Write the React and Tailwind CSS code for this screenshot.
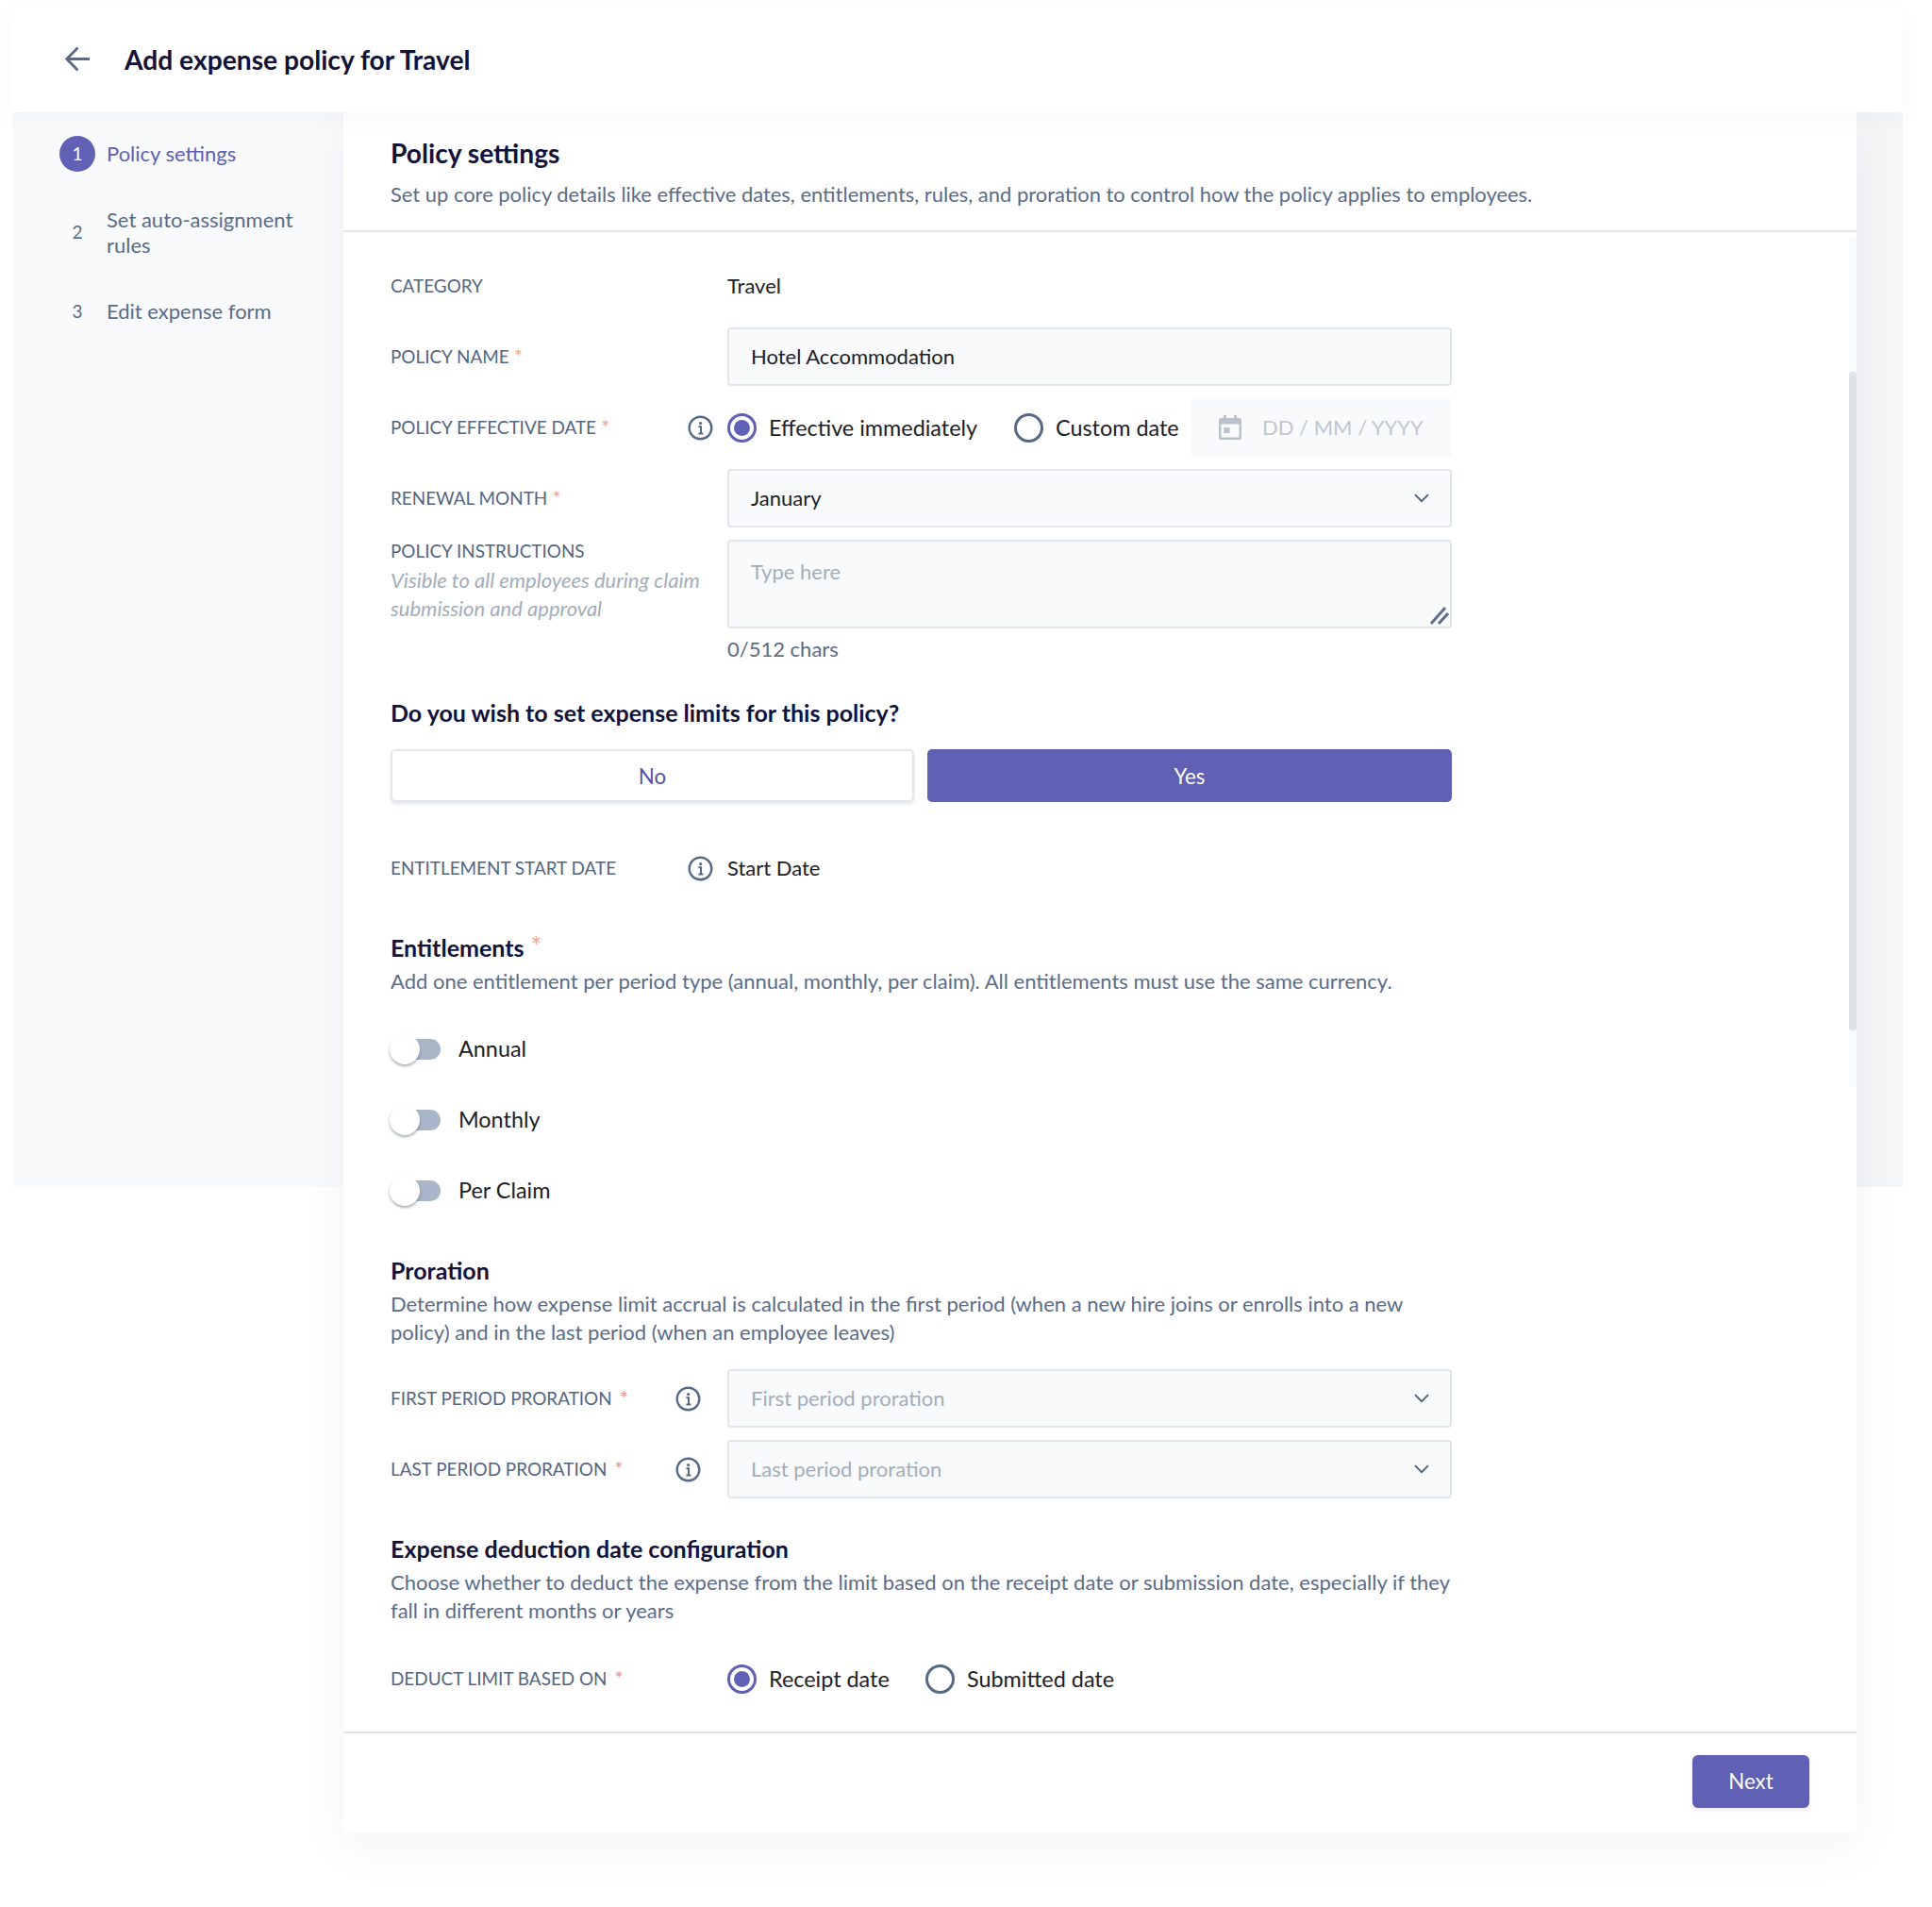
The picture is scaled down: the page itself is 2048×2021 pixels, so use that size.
const Star = ({ wide }) => (
  <span className={`text-[22px] leading-none relative top-[1px] ${wide ? "text-[#f28f8f] ml-[8px]" : "text-[#f4a68f] ml-[5px]"}`}>*</span>
);

const Info = () => (
  <svg width="27" height="27" viewBox="0 0 27 27" fill="none" className="shrink-0">
    <circle cx="13.5" cy="13.5" r="11.8" stroke="#566a86" strokeWidth="2.4" />
    <circle cx="13.6" cy="8.6" r="1.6" fill="#566a86" />
    <path d="M11.4 12.2h2.6v7M11.4 19.4h5" stroke="#566a86" strokeWidth="2" />
  </svg>
);

const Chevron = () => (
  <svg width="16" height="10" viewBox="0 0 16 10" fill="none" className="shrink-0">
    <path d="M1 1.2l7 7 7-7" stroke="#4f5f78" strokeWidth="1.8" />
  </svg>
);

const Radio = ({ on }) => (
  <span className={`w-[31px] h-[31px] rounded-full border-[3px] flex items-center justify-center shrink-0 ${on ? "border-[#6060b4]" : "border-[#566a86]"}`}>
    {on && <span className="w-[17px] h-[17px] rounded-full bg-[#6060b4]" />}
  </span>
);

const Label = ({ children, star, wide, info, pr = "pr-[15px]" }) => (
  <div className={`w-[357px] shrink-0 flex items-center justify-between ${pr}`}>
    <span className="text-[18.9px] text-[#536681] leading-[26px]">
      {children}
      {star && <Star wide={wide} />}
    </span>
    {info && <Info />}
  </div>
);

const Select = ({ text, placeholder }) => (
  <div className="flex-1 h-[62px] rounded-[4px] border-2 border-[#e2e5e9] bg-[#f8fafc] pl-[23px] pr-[22px] flex items-center justify-between">
    <span className={`text-[22px] pb-[2px] ${placeholder ? "text-[#a3adba]" : "text-[#1c2127]"}`}>{text}</span>
    <Chevron />
  </div>
);

const Toggle = ({ label }) => (
  <div className="flex items-center h-[32px]">
    <span className="relative w-[53px] h-[22px] rounded-full bg-[#a9b6c8] shrink-0">
      <span className="absolute -left-[1px] -top-[5px] w-[32px] h-[32px] rounded-full bg-white shadow-[0_2px_3px_rgba(60,70,90,0.45)]" />
    </span>
    <span className="ml-[19px] text-[23.4px] text-[#1c2127]">{label}</span>
  </div>
);

const H = ({ children, className = "" }) => (
  <h3 className={`text-[25px] font-bold text-[#12123a] leading-[30px] ${className}`}>{children}</h3>
);

const Sub = ({ children, className = "" }) => (
  <p className={`text-[22px] text-[#5a6c88] leading-[30px] ${className}`}>{children}</p>
);

const Step = ({ n, active, children }) => (
  <div className="flex items-center">
    <span className={`w-[38px] h-[38px] rounded-full flex items-center justify-center text-[19px] shrink-0 ${active ? "bg-[#6060b4] text-white" : "text-[#5a6c88]"}`}>{n}</span>
    <span className={`ml-[12px] pb-[1px] text-[22px] leading-[27px] ${active ? "text-[#6060b4]" : "text-[#5a6c88]"}`}>{children}</span>
  </div>
);

export default function App() {
  return (
    <div className="min-h-[2021px] bg-white pt-[8px] pl-[13px] pr-[31px] font-['Lato',sans-serif]">
      <header className="relative z-20 -ml-[3px] h-[111px] bg-white shadow-[0_8px_24px_rgba(30,40,60,0.03)] flex items-center pl-[59px] pb-[2px]">
        <svg width="26" height="27" viewBox="0 0 26 27" fill="none">
          <path d="M13.5 1.500L1.800 13.500l11.700 12M2 13.500h24" stroke="#5b6c88" strokeWidth="2.800" />
        </svg>
        <h1 className="ml-[37px] text-[28.2px] font-bold text-[#12123a] leading-[36px]">Add expense policy for Travel</h1>
      </header>

      <div className="flex items-start">
        <aside className="w-[351px] h-[1139px] shrink-0 bg-[#f8fafc] pl-[50px] pt-[25px] flex flex-col">
          <Step n="1" active>Policy settings</Step>
          <div className="mt-[37px]"><Step n="2">Set auto-assignment<br />rules</Step></div>
          <div className="mt-[37px]"><Step n="3">Edit expense form</Step></div>
        </aside>

        <main className="relative z-10 w-[1604px] h-[1823px] shrink-0 bg-white shadow-[0_16px_50px_rgba(30,40,60,0.05)] flex flex-col">
          <div className="h-[127px] border-b-2 border-[#e1e4e8] pl-[50px] pt-[25px]">
            <h2 className="text-[28.2px] font-bold text-[#12123a] leading-[36px]">Policy settings</h2>
            <p className="mt-[11px] text-[21.93px] text-[#5a6c88] leading-[30px]">Set up core policy details like effective dates, entitlements, rules, and proration to control how the policy applies to employees.</p>
          </div>

          <div className="absolute right-0 top-[131px] w-[8px] h-[902px] bg-[#fafbfc]">
            <div className="mt-[144px] w-[8px] h-[698px] rounded-[3px] bg-[#dfe3e7]" />
          </div>

          <div className="flex-1 pl-[50px] w-[1175px] pt-[26px] flex flex-col">
            <div className="flex flex-col gap-[13px]">
              <div className="flex items-center h-[62px]">
                <Label>CATEGORY</Label>
                <span className="text-[22px] pb-[2px] text-[#1c2127]">Travel</span>
              </div>

              <div className="flex items-center h-[62px]">
                <Label star>POLICY NAME</Label>
                <div className="flex-1 h-[62px] rounded-[4px] border-2 border-[#e2e5e9] bg-[#f8fafc] pl-[23px] pb-[2px] flex items-center text-[22px] text-[#1c2127]">Hotel Accommodation</div>
              </div>

              <div className="flex items-center h-[62px]">
                <Label star info>POLICY EFFECTIVE DATE</Label>
                <div className="flex-1 flex items-center">
                  <Radio on />
                  <span className="ml-[13px] pt-[1px] text-[23.4px] text-[#1c2127] w-[260px]">Effective immediately</span>
                  <Radio />
                  <span className="ml-[13px] pt-[1px] text-[23.4px] text-[#1c2127]">Custom date</span>
                  <div className="ml-auto w-[276px] h-[62px] rounded-[4px] bg-[#f8fafc] flex items-center pl-[29px]">
                    <svg width="24" height="26" viewBox="0 0 24 26" fill="none">
                      <path fillRule="evenodd" d="M5 0h3v3h8V0h3v3h2.500A2.500 2.500 0 0 1 24 5.500V23.500A2.500 2.500 0 0 1 21.500 26H2.500A2.500 2.500 0 0 1 0 23.500V5.500A2.500 2.500 0 0 1 2.500 3H5zM2.500 9.500V23.500H21.500V9.500z" fill="#b9c1cc" />
                      <rect x="5.500" y="13" width="6" height="6" fill="#b9c1cc" />
                    </svg>
                    <span className="ml-[22px] pb-[1px] text-[22px] text-[#c2c8d1]">DD / MM / YYYY</span>
                  </div>
                </div>
              </div>

              <div className="flex items-center h-[62px]">
                <Label star>RENEWAL MONTH</Label>
                <Select text="January" />
              </div>

              <div className="flex items-start h-[94px]">
                <div className="w-[357px] shrink-0 -mt-[1px]">
                  <div className="text-[18.9px] text-[#536681] leading-[26px]">POLICY INSTRUCTIONS</div>
                  <div className="text-[22px] italic text-[#a3adba] leading-[29.500px] mt-[3px]">Visible to all employees during claim<br />submission and approval</div>
                </div>
                <div className="relative flex-1 h-[94px] rounded-[4px] border-2 border-[#e2e5e9] bg-[#f8fafc] pl-[23px] pt-[17px] text-[22px] leading-[30px] text-[#a3adba]">
                  Type here
                  <svg width="20" height="20" viewBox="0 0 20 20" fill="none" className="absolute right-[1px] bottom-[1px]">
                    <path d="M1 18L16 1M9 18L19 7" stroke="#5f6f8a" strokeWidth="3" />
                  </svg>
                </div>
              </div>
            </div>

            <div className="pl-[357px] mt-[7px] text-[22px] leading-[30px] text-[#5a6c88]">0/512 chars</div>

            <H className="mt-[37px]">Do you wish to set expense limits for this policy?</H>

            <div className="mt-[24px] flex gap-[14px]">
              <button className="w-[555px] h-[56px] pt-[2px] rounded-[5px] border-2 border-[#e4e6ea] bg-white shadow-[0_2px_3px_rgba(40,50,70,0.12)] text-[22.3px] text-[#5252a8]">No</button>
              <button className="w-[556px] h-[56px] pt-[2px] rounded-[5px] bg-[#6060b4] text-[22.3px] text-white">Yes</button>
            </div>

            <div className="mt-[55px] flex items-center h-[30px]">
              <Label info>ENTITLEMENT START DATE</Label>
              <span className="text-[22px] pb-[2px] text-[#1c2127]">Start Date</span>
            </div>

            <H className="mt-[54px]">Entitlements<span className="text-[#f4a68f] text-[28px] font-normal leading-none ml-[7px]">*</span></H>
            <Sub className="mt-[6px]">Add one entitlement per period type (annual, monthly, per claim). All entitlements must use the same currency.</Sub>

            <div className="mt-[41px] flex flex-col gap-[43px]">
              <Toggle label="Annual" />
              <Toggle label="Monthly" />
              <Toggle label="Per Claim" />
            </div>

            <H className="mt-[53px]">Proration</H>
            <Sub className="mt-[6px]">Determine how expense limit accrual is calculated in the first period (when a new hire joins or enrolls into a new<br />policy) and in the last period (when an employee leaves)</Sub>

            <div className="mt-[24px] flex flex-col gap-[13px]">
              <div className="flex items-center h-[62px]">
                <Label star wide info pr="pr-[28px]">FIRST PERIOD PRORATION</Label>
                <Select text="First period proration" placeholder />
              </div>
              <div className="flex items-center h-[62px]">
                <Label star wide info pr="pr-[28px]">LAST PERIOD PRORATION</Label>
                <Select text="Last period proration" placeholder />
              </div>
            </div>

            <H className="mt-[38px]">Expense deduction date configuration</H>
            <Sub className="mt-[6px]">Choose whether to deduct the expense from the limit based on the receipt date or submission date, especially if they<br />fall in different months or years</Sub>

            <div className="mt-[26px] flex items-center h-[62px]">
              <Label star wide>DEDUCT LIMIT BASED ON</Label>
              <Radio on />
              <span className="ml-[13px] pt-[1px] text-[23.4px] text-[#1c2127] w-[166px]">Receipt date</span>
              <Radio />
              <span className="ml-[13px] pt-[1px] text-[23.4px] text-[#1c2127]">Submitted date</span>
            </div>
          </div>

          <div className="h-[107px] border-t-2 border-[#e1e4e8] pt-[23px] pr-[50px] flex justify-end items-start">
            <button className="w-[124px] h-[56px] rounded-[6px] bg-[#6060b4] text-[22.3px] text-white shadow-[0_2px_4px_rgba(96,96,180,0.15)]">Next</button>
          </div>
        </main>

        <div className="w-[49px] h-[1139px] shrink-0 bg-[#f4f6f8]" />
      </div>
    </div>
  );
}
